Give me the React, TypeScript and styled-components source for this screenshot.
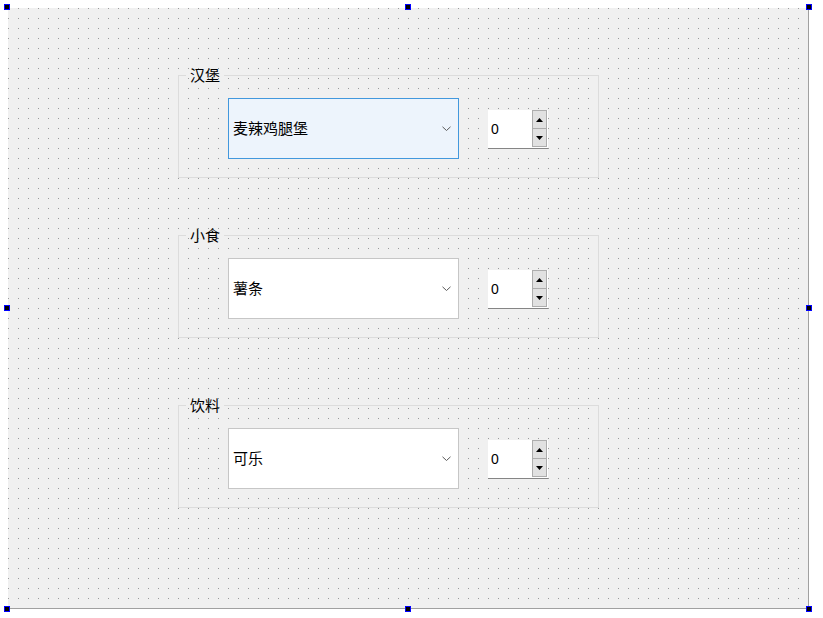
import React from "react";
import styled, { createGlobalStyle } from "styled-components";

const Global = createGlobalStyle`
  html, body { margin: 0; padding: 0; background: #ffffff; }
  body { font-family: "Noto Sans CJK SC", "Noto Sans", sans-serif; color: #000; }
`;

const Page = styled.div`
  padding: 8px;
  width: 823px;
  height: 618px;
  box-sizing: border-box;
`;

const Form = styled.div`
  position: relative;
  border-right: 1px solid #a0a0a0;
  border-bottom: 1px solid #a0a0a0;
  background-color: #9a9a9a;
  background-image:
    linear-gradient(to right, transparent 1px, #f0f0f0 1px),
    linear-gradient(to bottom, transparent 1px, #f0f0f0 1px);
  background-size: 10px 10px;
  display: flex;
  flex-direction: column;
  padding: 59px 0 0 170px;
  box-sizing: content-box;
  width: 630px;
  height: 541px;
`;

const Handle = styled.div<{ $x: number; $y: number }>`
  position: absolute;
  left: ${(p) => p.$x}px;
  top: ${(p) => p.$y}px;
  width: 4px;
  height: 4px;
  border: 1px solid #0000ff;
  background: #000000;
`;

const GroupBox = styled.fieldset<{ $gap: number }>`
  margin: ${(p) => p.$gap}px 0 0 0;
  padding: 15px 0 18px 0;
  width: 421px;
  box-sizing: border-box;
  border: 1px solid #dcdcdc;
  min-inline-size: 0;
`;

const Legend = styled.legend`
  margin-left: 7px;
  padding: 0 4px;
  font-size: 15px;
  line-height: 16px;
  height: 16px;
  color: #000;
`;

const Row = styled.div`
  display: flex;
  align-items: flex-start;
  gap: 29px;
  padding-left: 49px;
`;

const Combo = styled.div<{ $active?: boolean }>`
  width: 231px;
  height: 61px;
  box-sizing: border-box;
  border: 1px solid ${(p) => (p.$active ? "#4298dd" : "#c6c6c6")};
  background: ${(p) => (p.$active ? "#edf4fc" : "#ffffff")};
  display: flex;
  align-items: center;
  justify-content: space-between;
  padding: 0 7px 0 4px;
  font-size: 15px;
`;

const ComboText = styled.span`
  line-height: 20px;
  margin-top: -2px;
`;

const Chevron = () => (
  <svg width="9" height="6" viewBox="0 0 9 6">
    <polyline points="0.5,0.8 4.5,4.5 8.5,0.8" fill="none" stroke="#5a5a5a" strokeWidth="1" />
  </svg>
);

const Spin = styled.div`
  margin-top: 12px;
  width: 60px;
  height: 39px;
  box-sizing: border-box;
  background: #ffffff;
  border-bottom: 1px solid #858585;
  display: flex;
  align-items: stretch;
`;

const SpinValue = styled.div`
  flex: 1;
  display: flex;
  align-items: center;
  padding-left: 3px;
  font-family: "Liberation Sans", Arial, sans-serif;
  font-size: 14px;
`;

const SpinButtons = styled.div`
  width: 15px;
  margin: 0 1px 1px 0;
  display: flex;
  flex-direction: column;
  border: 1px solid #adadad;
  box-sizing: border-box;
`;

const SpinButton = styled.div<{ $top?: boolean }>`
  flex: 1;
  background: #e1e1e1;
  display: flex;
  align-items: center;
  justify-content: center;
  border-top: ${(p) => (p.$top ? "none" : "1px solid #adadad")};
`;

const Arrow = ({ up }: { up?: boolean }) => (
  <svg width="7" height="4" viewBox="0 0 7 4">
    {up ? <polygon points="3.5,0 7,4 0,4" fill="#000" /> : <polygon points="0,0 7,0 3.5,4" fill="#000" />}
  </svg>
);

const groups = [
  { title: "汉堡", item: "麦辣鸡腿堡", active: true, gap: 0 },
  { title: "小食", item: "薯条", active: false, gap: 49 },
  { title: "饮料", item: "可乐", active: false, gap: 59 },
];

const handles: [number, number][] = [
  [-4, -4], [397, -4], [798, -4],
  [-4, 297], [798, 297],
  [-4, 598], [397, 598], [798, 598],
];

export default function App() {
  return (
    <>
      <Global />
      <Page>
        <Form>
          {groups.map((g) => (
            <GroupBox key={g.title} $gap={g.gap}>
              <Legend>{g.title}</Legend>
              <Row>
                <Combo $active={g.active}>
                  <ComboText>{g.item}</ComboText>
                  <Chevron />
                </Combo>
                <Spin>
                  <SpinValue>0</SpinValue>
                  <SpinButtons>
                    <SpinButton $top>
                      <Arrow up />
                    </SpinButton>
                    <SpinButton>
                      <Arrow />
                    </SpinButton>
                  </SpinButtons>
                </Spin>
              </Row>
            </GroupBox>
          ))}
          {handles.map(([x, y], i) => (
            <Handle key={i} $x={x} $y={y} />
          ))}
        </Form>
      </Page>
    </>
  );
}
